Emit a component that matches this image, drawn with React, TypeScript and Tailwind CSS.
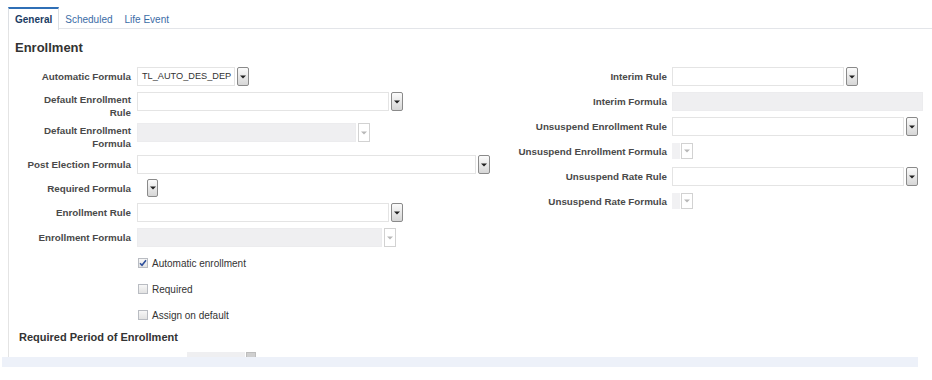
import React from "react";

const Caret = ({ muted }: { muted?: boolean }) => (
    <svg width="6" height="4" viewBox="0 0 6 4">
        <path d="M0 0.5h6L3 3.5z" fill={muted ? "#b8b8b8" : "#1f1f1f"} />
    </svg>
);

const DropBtn = ({ muted, small }: { muted?: boolean; small?: boolean }) => (
    <div
        className={
            (small ? "h-[16px] w-[12px] " : "h-[19px] w-[12px] ") +
            (muted
                ? "border border-[#d2d2d2] bg-white"
                : "border border-[#8a8a8a] bg-linear-to-b from-[#fbfbfb] to-[#d6d6d6] rounded-[2px]") +
            " flex shrink-0 items-center justify-center"
        }
    >
        <Caret muted={muted} />
    </div>
);

const Select = ({ w, value, disabled, noBtn }: { w: string; value?: string; disabled?: boolean; noBtn?: boolean }) => (
    <div className="flex items-center gap-[2px]">
        <div
            className={
                w +
                " h-[19px] flex items-center overflow-hidden whitespace-nowrap pl-[4px] text-[9.2px] text-[#333] " +
                (disabled ? "bg-[#efeff1] border border-[#ececee]" : "bg-white border border-[#e4e4e4]")
            }
        >
            {value}
        </div>
        {!noBtn && <DropBtn muted={disabled} />}
    </div>
);

const Tiny = () => (
    <div className="flex items-center gap-px">
        <div className="h-[16px] w-[8px] bg-[#f1f1f3]" />
        <DropBtn muted small />
    </div>
);

const Field = ({
    label,
    tall,
    h,
    labelW,
    children,
}: {
    label: string | string[];
    tall?: boolean;
    h: string;
    labelW: string;
    children: React.ReactNode;
}) => (
    <div className={"flex items-start pt-[3px] " + h}>
        <div
            className={
                labelW +
                " shrink-0 text-right text-[9.8px] font-bold text-[#4a4a4a] " +
                (tall ? "leading-[13px] pt-px" : "leading-[19px]")
            }
        >
            {Array.isArray(label) ? label.map((l) => <div key={l}>{l}</div>) : label}
        </div>
        {children}
    </div>
);

const Check = ({ label, checked }: { label: string; checked?: boolean }) => (
    <div className="flex h-[26px] items-center gap-[4px] pl-[129px]">
        <div className="flex h-[10px] w-[10px] items-center justify-center border border-[#b9bcc2] bg-linear-to-b from-[#f7f7f7] to-[#e2e2e2]">
            {checked && (
                <svg width="8" height="8" viewBox="0 0 8 8">
                    <path d="M1 4.2l2 2L7 1.2" stroke="#2d4f9c" strokeWidth="1.6" fill="none" />
                </svg>
            )}
        </div>
        <span className="text-[10px] text-[#333]">{label}</span>
    </div>
);

export default function App() {
    const L = "w-[122px] mr-[6px]";
    const R = "w-[167px] mr-[5px]";

    return (
        <div className="h-[380px] w-[932px] overflow-hidden bg-white font-['Liberation_Sans',Arial,sans-serif]">
            <div className="pl-[8px] pt-[7px]">
                {/* tabs */}
                <div className="flex h-[22px] items-start border-b border-[#e3e5e9] text-[10px]">
                    <div className="-mb-px h-[23px] border-x border-t-2 border-x-[#dcdfe3] border-t-[#2f6fb6] bg-white px-[6px] pt-[2px] font-bold leading-[17px] text-[#1b3c63]">
                        General
                    </div>
                    <div className="px-[6px] pt-[4px] leading-[17px] text-[#3b6ca6]">Scheduled</div>
                    <div className="px-[6px] pt-[4px] leading-[17px] text-[#3b6ca6]">Life Event</div>
                </div>

                <div className="h-[328px] overflow-hidden border-l border-[#e4e4e4]">
                    <div className="pl-[6px] pt-[10px] text-[13px] font-bold leading-[17px] text-[#333]">Enrollment</div>

                    <div className="mt-[8px] flex">
                        {/* left column */}
                        <div className="w-[491px] shrink-0">
                            <Field label="Automatic Formula" h="h-[25px]" labelW={L}>
                                <Select w="w-[98px]" value="TL_AUTO_DES_DEP" />
                            </Field>
                            <Field label={["Default Enrollment", "Rule"]} tall h="h-[31px]" labelW={L}>
                                <Select w="w-[252px]" />
                            </Field>
                            <Field label={["Default Enrollment", "Formula"]} tall h="h-[32px]" labelW={L}>
                                <Select w="w-[219px]" disabled />
                            </Field>
                            <Field label="Post Election Formula" h="h-[24px]" labelW={L}>
                                <Select w="w-[339px]" />
                            </Field>
                            <Field label="Required Formula" h="h-[24px]" labelW={L}>
                                <div className="flex items-center gap-px">
                                    <div className="h-[18px] w-[9px] bg-white" />
                                    <div className="flex h-[18px] w-[11px] items-center justify-center rounded-[2px] border border-[#8a8a8a] bg-linear-to-b from-[#fbfbfb] to-[#d6d6d6]">
                                        <Caret />
                                    </div>
                                </div>
                            </Field>
                            <Field label="Enrollment Rule" h="h-[25px]" labelW={L}>
                                <Select w="w-[252px]" />
                            </Field>
                            <Field label="Enrollment Formula" h="h-[25px]" labelW={L}>
                                <Select w="w-[245px]" disabled />
                            </Field>

                            <Check label="Automatic enrollment" checked />
                            <Check label="Required" />
                            <Check label="Assign on default" />
                        </div>

                        {/* right column */}
                        <div className="flex-1">
                            <Field label="Interim Rule" h="h-[25px]" labelW={R}>
                                <Select w="w-[172px]" />
                            </Field>
                            <Field label="Interim Formula" h="h-[25px]" labelW={R}>
                                <Select w="w-[251px]" disabled noBtn />
                            </Field>
                            <Field label="Unsuspend Enrollment Rule" h="h-[25px]" labelW={R}>
                                <Select w="w-[232px]" />
                            </Field>
                            <Field label="Unsuspend Enrollment Formula" h="h-[25px]" labelW={R}>
                                <div className="pt-px">
                                    <Tiny />
                                </div>
                            </Field>
                            <Field label="Unsuspend Rate Rule" h="h-[25px]" labelW={R}>
                                <Select w="w-[232px]" />
                            </Field>
                            <Field label="Unsuspend Rate Formula" h="h-[25px]" labelW={R}>
                                <div className="pt-px">
                                    <Tiny />
                                </div>
                            </Field>
                        </div>
                    </div>

                    <div className="pl-[10px] pt-px text-[11px] font-bold leading-[16px] text-[#333]">
                        Required Period of Enrollment
                    </div>
                    <div className="mt-[7px] flex items-start gap-px pl-[178px]">
                        <div className="h-[18px] w-[58px] bg-[#efeff1]" />
                        <div className="h-[18px] w-[10px] border border-[#bdbdbd] bg-[#cfcfcf]" />
                    </div>
                </div>
            </div>
            <div className="ml-[2px] h-[10px] w-[916px] bg-[#edf1f9]" />
        </div>
    );
}
